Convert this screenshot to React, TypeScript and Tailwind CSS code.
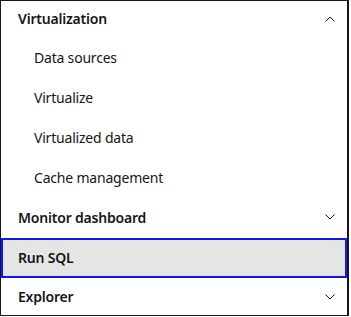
import React from 'react';

function Chevron({ up }: { up?: boolean }) {
  return (
    <svg width="10" height="6" viewBox="0 0 10 6" className="text-[#161616]">
      <path
        d={up ? 'M0.5 5.5 L5 1 L9.5 5.5' : 'M0.5 0.5 L5 5 L9.5 0.5'}
        fill="none"
        stroke="currentColor"
        strokeWidth="1"
      />
    </svg>
  );
}

const subItems = ['Data sources', 'Virtualize', 'Virtualized data', 'Cache management'];

export default function App() {
  return (
    <div
      className="w-[349px] h-[316px] border-l border-t border-b border-r-2 border-[#161616] bg-white overflow-hidden text-[14px] text-[#161616] tracking-[-0.2px]"
      style={{ fontFamily: '"Noto Sans", "Open Sans", sans-serif' }}
    >
      {/* Virtualization group */}
      <div className="h-[37px] flex items-center justify-between pl-[17px] pr-[12px] pb-[2px] font-semibold">
        <span>Virtualization</span>
        <Chevron up />
      </div>
      {subItems.map((s) => (
        <div key={s} className="h-10 flex items-center pl-[33px] pb-[1px]">
          {s}
        </div>
      ))}

      <div className="h-10 flex items-center justify-between pl-[17px] pr-[12px] pb-[2px] font-semibold">
        <span>Monitor dashboard</span>
        <Chevron />
      </div>

      {/* focused link */}
      <div className="h-10 flex items-center pl-[15px] pb-[1px] font-semibold bg-[#e5e5e5] border-2 border-[#1414f0]">
        Run SQL
      </div>

      <div className="h-10 flex items-center justify-between pl-[17px] pr-[12px] pb-[3px] font-semibold">
        <span>Explorer</span>
        <Chevron />
      </div>
    </div>
  );
}
